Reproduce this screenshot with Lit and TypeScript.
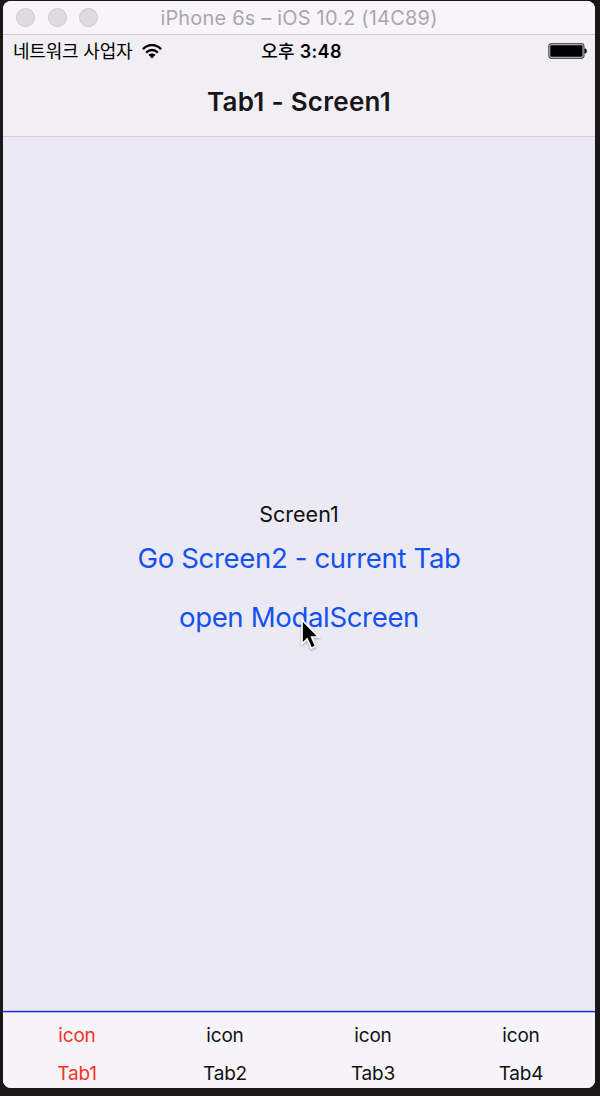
import { LitElement, html, css } from "lit";
import { customElement, state } from "lit/decorators.js";
import { classMap } from "lit/directives/class-map.js";

@customElement("window-bar")
class WindowBar extends LitElement {
  static styles = css`
    :host { display: grid; grid-template-columns: 97px 1fr 97px; align-items: center; height: 34px; box-sizing: border-box; background: #f7f5f9; border-bottom: 1px solid #cfcdd1; }
    .lights { display: flex; gap: 12.5px; padding-left: 13px; }
    .light { width: 19px; height: 19px; box-sizing: border-box; border-radius: 50%; background: #dddbdf; border: 1px solid #cbc8cc; flex: none; }
    .title { text-align: center; font-size: 20px; line-height: 24px; color: #aaa7ab; white-space: nowrap; letter-spacing: 0.18px; }
  `;
  render() {
    return html`
      <div class="lights"><span class="light"></span><span class="light"></span><span class="light"></span></div>
      <div class="title">iPhone 6s – iOS 10.2 (14C89)</div>
    `;
  }
}

@customElement("status-bar")
class StatusBar extends LitElement {
  static styles = css`
    :host { display: grid; grid-template-columns: 1fr auto 1fr; align-items: center; height: 33px; padding: 0 8px 0 10px; color: #000; }
    .carrier { display: flex; align-items: center; gap: 10px; font-size: 18px; line-height: 24px; letter-spacing: -0.2px; white-space: nowrap; }
    .time { font-size: 18px; font-weight: 600; line-height: 24px; letter-spacing: 0.3px; white-space: nowrap; padding-left: 3px; }
    .period { font-weight: 500; }
    .battery { justify-self: end; position: relative; top: -0.5px; }
    svg { display: block; }
  `;
  render() {
    return html`
      <div class="carrier">
        <span>네트워크 사업자</span>
        <svg width="20" height="15" viewBox="0 0 20 15" fill="none" stroke="#000" stroke-width="2.3">
          <path d="M.9 5.1C6-.4 14-.4 19.1 5.1"></path>
          <path d="M4.1 8.7C7.5 5.1 12.5 5.1 15.9 8.7"></path>
          <path d="M10 14.4 6.4 10.8c2-1.9 5.2-1.9 7.2 0z" fill="#000" stroke="none"></path>
        </svg>
      </div>
      <div class="time"><span class="period">오후</span> 3:48</div>
      <svg class="battery" width="39" height="16" viewBox="0 0 39 16">
        <rect x=".8" y=".7" width="35.2" height="14.6" rx="2.8" fill="#c5c3c7" stroke="#59575b" stroke-width="1.2"></rect>
        <rect x="2.3" y="2.2" width="32.2" height="11.6" rx="1" fill="#000"></rect>
        <path d="M36.5 5.5h.8Q38.8 6 38.8 8t-1.5 2.5h-.8z" fill="#000"></path>
      </svg>
    `;
  }
}

@customElement("tab-bar")
class TabBar extends LitElement {
  static styles = css`
    :host { display: grid; grid-template-columns: repeat(4, 1fr); height: 77px; box-sizing: border-box; background: #f6f4f8; border-top: 1px solid #1430dc; box-shadow: 0 -1px #c3cbf3, inset 0 1px #a9b6f1; }
    .tab { display: flex; flex-direction: column; align-items: center; justify-content: space-between; padding: 12px 0 2px; font-size: 19px; line-height: 24px; letter-spacing: -0.2px; color: #111; cursor: default; }
    .active { color: #f13324; }
  `;
  @state() private active = 0;
  render() {
    return ["Tab1", "Tab2", "Tab3", "Tab4"].map((name, i) => html`
      <div class=${classMap({ tab: true, active: i === this.active })} @click=${() => { this.active = i; }}>
        <span>icon</span><span>${name}</span>
      </div>
    `);
  }
}

@customElement("app-root")
class AppRoot extends LitElement {
  static styles = css`
    :host { display: block; box-sizing: border-box; height: 1096px; padding: 1px 5px 8px 3px; background: #1a1719; font-family: Inter, "Noto Sans CJK KR", sans-serif; }
    .phone { display: flex; flex-direction: column; height: 100%; border-radius: 8px; overflow: hidden; background: #ebe9f3; }
    .header { background: #f1eff4; height: 102px; box-sizing: border-box; border-bottom: 1px solid #d3d1d9; }
    .heading { text-align: center; font-size: 26px; line-height: 32px; font-weight: 600; letter-spacing: 0.28px; color: #18161a; padding-top: 18px; }
    .screen { flex: 1; display: flex; flex-direction: column; align-items: center; justify-content: center; position: relative; white-space: nowrap; }
    .label { font-size: 21.5px; line-height: 28px; color: #111; }
    .link { font-size: 27.6px; line-height: 34px; letter-spacing: -0.37px; color: #1452ee; padding: 13px 0 12px; }
    .link:last-of-type { padding-bottom: 14px; }
    .cursor { position: absolute; left: 297px; top: 481px; filter: drop-shadow(0 1px 1px #0005); }
  `;
  render() {
    return html`
      <div class="phone">
        <window-bar></window-bar>
        <div class="header">
          <status-bar></status-bar>
          <div class="heading">Tab1 - Screen1</div>
        </div>
        <div class="screen">
          <div class="label">Screen1</div>
          <div class="link">Go Screen2 - current Tab</div>
          <div class="link">open ModalScreen</div>
          <svg class="cursor" width="22" height="32" viewBox="0 0 22 32">
            <path d="M2 2v24l5.1-5 4.1 9.2 4.4-2L11.7 19h7z" fill="#000" stroke="#fff" stroke-width="1.7"></path>
          </svg>
        </div>
        <tab-bar></tab-bar>
      </div>
    `;
  }
}
